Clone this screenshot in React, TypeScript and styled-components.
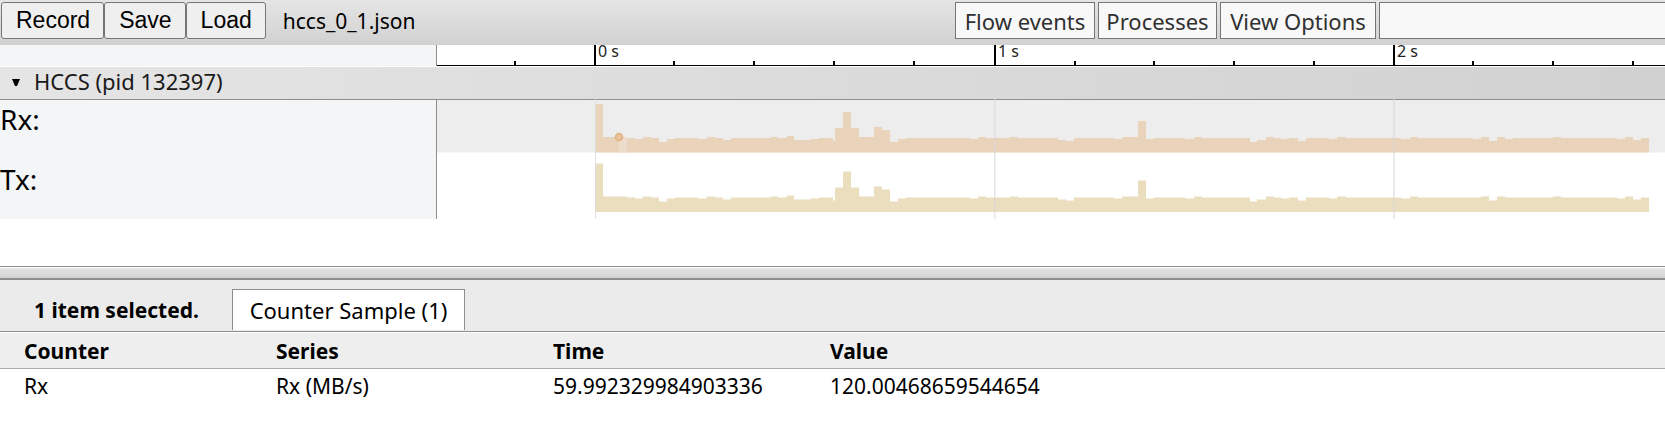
import React from "react";
import styled, { createGlobalStyle } from "styled-components";

const GlobalStyle = createGlobalStyle`
  * { box-sizing: border-box; }
  body {
    margin: 0;
    background: #fff;
    color: #000;
    font-family: "Noto Sans", "Open Sans", sans-serif;
    font-size: 21px;
    line-height: 32px;
    overflow-x: hidden;
  }
`;

const line = "#8e8e8e";
const headingWidth = "437px";

const Toolbar = styled.header`
  display: flex;
  align-items: flex-start;
  height: 45px;
  padding: 2px 0 0 1px;
  background: linear-gradient(#e5e5e5, #d1d1d1);
`;

const FileButton = styled.button`
  height: 37px;
  padding: 0 13px 2px 14px;
  border: 1px solid #767676;
  border-radius: 3px;
  background: #efefef;
  color: #000;
  font-family: "Liberation Sans", Arial, sans-serif;
  font-size: 23px;
  line-height: 32px;
`;

const FileName = styled.span`
  padding: 3px 0 0 17px;
`;

const ViewControls = styled.div`
  display: flex;
  gap: 3px;
  margin-left: auto;
`;

const MenuButton = styled.button<{ $width: number }>`
  width: ${(p) => p.$width}px;
  height: 37px;
  padding: 0;
  border: 1px solid #767676;
  background: #f8f8f8;
  color: #303030;
  font-family: inherit;
  font-size: 22px;
  line-height: 32px;
  white-space: nowrap;
`;

const SearchBox = styled.input`
  width: 286px;
  height: 37px;
  padding: 0 8px;
  border: 1px solid #767676;
  border-right: none;
  border-radius: 0;
  background: #f8f8f8;
  font: inherit;
`;

const TimelineRow = styled.div`
  display: grid;
  grid-template-columns: ${headingWidth} 1fr;
`;

const Heading = styled.div`
  border-right: 1px solid ${line};
  background: #f4f5f7;
`;

const Ruler = styled.svg`
  display: block;
  width: 100%;
  height: 21px;
  overflow: visible;
  font-size: 16px;
`;

const Tracks = styled.section`
  position: relative;
  padding-top: 1px;
`;

const GridOverlay = styled.svg`
  position: absolute;
  top: 0;
  left: ${headingWidth};
  width: calc(100% - ${headingWidth});
  height: 100%;
  pointer-events: none;
`;

const ProcessHeader = styled.h2`
  display: flex;
  height: 33px;
  margin: 0;
  padding-left: 12px;
  border-bottom: 1px solid ${line};
  background: linear-gradient(to right, #e5e5e5, #d1d1d1);
  color: #1a1a1a;
  font-size: 22px;
  font-weight: 400;
  line-height: 29px;
`;

const Toggle = styled.button`
  width: 22px;
  height: 30px;
  padding: 0;
  border: none;
  background: none;
  line-height: 28px;
  text-align: left;
`;

const TrackHeading = styled(Heading)`
  font-size: 28px;
  line-height: 38px;
`;

const CounterChart = styled.svg<{ $height: number }>`
  display: block;
  width: 100%;
  height: ${(p) => p.$height}px;
`;

const DragHandle = styled.div`
  height: 14px;
  margin-top: 47px;
  border-top: 1px solid ${line};
  border-bottom: 2px solid ${line};
  background: linear-gradient(#fff 1px, #e5e5e5 1px, #d1d1d1);
`;

const TabStrip = styled.div`
  display: flex;
  align-items: flex-end;
  height: 52px;
  padding-bottom: 1px;
  border-bottom: 1px solid ${line};
  background: #ebebeb;
`;

const SelectionLabel = styled.strong`
  width: 232px;
  height: 41px;
  padding-left: 34px;
  line-height: 42px;
`;

const Tab = styled.button`
  width: 233px;
  height: 41px;
  padding: 0;
  border: 1px solid ${line};
  border-bottom: none;
  background: #fff;
  color: #000;
  font: inherit;
  font-size: 22px;
  line-height: 40px;
`;

const SampleTable = styled.table`
  width: 100%;
  margin-top: 1px;
  border-spacing: 0;
  table-layout: fixed;
  text-align: left;
`;

const HeadCell = styled.th<{ $width?: number }>`
  width: ${(p) => (p.$width ? `${p.$width}px` : "auto")};
  height: 36px;
  padding: 0;
  border-bottom: 1px solid #aaa;
  background: #eee;
  &:first-child { padding-left: 24px; }
`;

const Cell = styled.td`
  height: 34px;
  padding: 0;
  &:first-child { padding-left: 24px; }
`;

// Each step is [start x, height]; a step lasts until the next one starts.
type Step = [number, number];

const rxSteps: Step[] = [
  [158, 48], [166, 15], [190, 14], [198, 13], [206, 15], [214, 14], [222, 10],
  [230, 13], [238, 14], [261, 13], [270, 15], [278, 14], [286, 12], [294, 14],
  [334, 15], [341, 14], [350, 16], [357, 12], [374, 13], [382, 14], [396, 11],
  [398, 24], [406, 40], [414, 24], [422, 15], [437, 25], [445, 22], [453, 10],
  [461, 13], [469, 14], [533, 13], [541, 15], [549, 14], [573, 15], [581, 14],
  [621, 12], [629, 11], [637, 14], [677, 13], [685, 15], [701, 31], [709, 13],
  [717, 14], [748, 13], [757, 15], [765, 14], [813, 10], [820, 12], [829, 15],
  [837, 14], [844, 13], [852, 14], [861, 11], [869, 14], [892, 13], [900, 15],
  [909, 14], [964, 13], [973, 15], [981, 14], [1036, 13], [1044, 15], [1052, 11],
  [1060, 15], [1068, 13], [1076, 14], [1116, 15], [1124, 14], [1180, 13],
  [1188, 15], [1196, 12], [1204, 14],
];
const txSteps: Step[] = rxSteps.map(([x, h]) =>
  x === 1036 || x === 1068 ? [x, 14] : [x, h],
);
const seriesEnd = 1212;

const area = (steps: Step[], base: number, zero: number, extra = 0) =>
  `M158 ${base}` +
  steps
    .map(([x, h], i) => `V${zero - h - extra}H${i + 1 < steps.length ? steps[i + 1][0] : seriesEnd}`)
    .join("") +
  `V${base}Z`;

const minorTicks = [77, 236, 316, 396, 476, 637, 716, 796, 876, 1035, 1115, 1195];
const majorTicks = [
  { x: 157, label: "0 s" },
  { x: 557, label: "1 s" },
  { x: 956, label: "2 s" },
];

export default function App() {
  return (
    <main>
      <GlobalStyle />
      <Toolbar>
        <FileButton>Record</FileButton>
        <FileButton>Save</FileButton>
        <FileButton>Load</FileButton>
        <FileName>hccs_0_1.json</FileName>
        <ViewControls>
          <MenuButton $width={140}>Flow events</MenuButton>
          <MenuButton $width={119}>Processes</MenuButton>
          <MenuButton $width={156}>View Options</MenuButton>
          <SearchBox type="text" aria-label="Search" />
        </ViewControls>
      </Toolbar>

      <TimelineRow>
        <Heading />
        <Ruler shapeRendering="crispEdges">
          {minorTicks.map((x) => (
            <rect key={x} x={x} y={16} width={2} height={5} />
          ))}
          {majorTicks.map(({ x, label }) => (
            <g key={x}>
              <rect x={x} y={0} width={2} height={21} />
              <text x={x + 4} y={12} fill="#222">{label}</text>
            </g>
          ))}
          <rect x={0} y={20} width="100%" height={1} />
        </Ruler>
      </TimelineRow>

      <Tracks>
        <ProcessHeader>
          <Toggle aria-label="Collapse process">
            <svg width="8" height="8" viewBox="0 0 8 8">
              <path d="M0 1H8L5 8H3Z" />
            </svg>
          </Toggle>
          HCCS (pid 132397)
        </ProcessHeader>
        <TimelineRow>
          <TrackHeading>Rx:</TrackHeading>
          <CounterChart $height={60}>
            <rect width="100%" height="52.5" fill="#ededed" />
            <path d={area(rxSteps, 52.5, 52)} fill="#e9d3bb" />
            <rect x="182" y="37" width="8" height="15.5" fill="#ecdccb" />
            <circle cx="182" cy="37" r="3.5" fill="#e8c59d" stroke="#e2b27e" strokeWidth="1.5" />
          </CounterChart>
        </TimelineRow>
        <TimelineRow>
          <TrackHeading>Tx:</TrackHeading>
          <CounterChart $height={59}>
            <path d={area(txSteps, 52, 52, 0.5)} fill="#eadebe" />
          </CounterChart>
        </TimelineRow>
        <GridOverlay>
          <rect x="158" width="1" height="100%" fill="#dcdcdc" fillOpacity=".9" />
          <rect x="557" width="1" height="100%" fill="#d8d8d8" fillOpacity=".7" />
          <rect x="558" width="1" height="100%" fill="#d8d8d8" fillOpacity=".3" />
          <rect x="956" width="2" height="100%" fill="#d8d8d8" fillOpacity=".5" />
        </GridOverlay>
      </Tracks>

      <DragHandle />

      <TabStrip>
        <SelectionLabel>1 item selected.</SelectionLabel>
        <Tab>Counter Sample (1)</Tab>
      </TabStrip>
      <SampleTable>
        <thead>
          <tr>
            <HeadCell $width={276}>Counter</HeadCell>
            <HeadCell $width={277}>Series</HeadCell>
            <HeadCell $width={277}>Time</HeadCell>
            <HeadCell>Value</HeadCell>
          </tr>
        </thead>
        <tbody>
          <tr>
            <Cell>Rx</Cell>
            <Cell>Rx (MB/s)</Cell>
            <Cell>59.992329984903336</Cell>
            <Cell>120.00468659544654</Cell>
          </tr>
        </tbody>
      </SampleTable>
    </main>
  );
}
